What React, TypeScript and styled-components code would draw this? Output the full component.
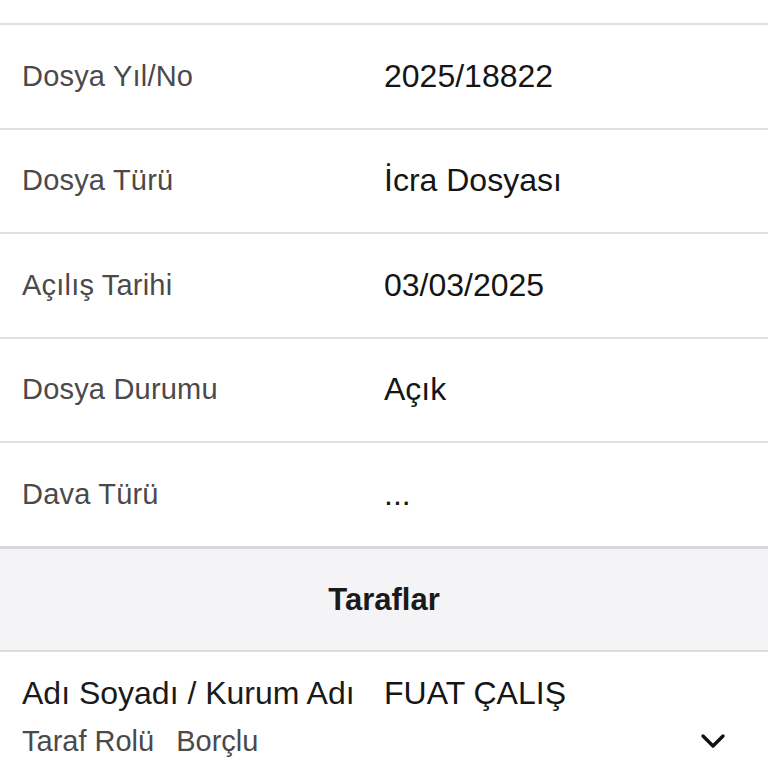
import React from 'react';
import styled, { createGlobalStyle } from 'styled-components';

const GlobalStyle = createGlobalStyle`
    * { box-sizing: border-box; }
    body {
        margin: 0;
        background: #ffffff;
        font-family: "Liberation Sans", Arial, sans-serif;
    }
`;

const details = [
    { label: 'Dosya Yıl/No', value: '2025/18822' },
    { label: 'Dosya Türü', value: 'İcra Dosyası' },
    { label: 'Açılış Tarihi', value: '03/03/2025' },
    { label: 'Dosya Durumu', value: 'Açık' },
    { label: 'Dava Türü', value: '...' },
];

const Chevron = () => (
    <svg width="26" height="16" viewBox="0 0 26 16" fill="none">
        <path d="M3 3l10 10 10-10" stroke="#111" strokeWidth="3.4" strokeLinecap="round" strokeLinejoin="round" />
    </svg>
);

const App = () => {
    return (
        <Page>
            <GlobalStyle />
            <CutRow />
            {details.map((d) => (
                <DetailRow key={d.label}>
                    <Label>{d.label}</Label>
                    <Value>{d.value}</Value>
                </DetailRow>
            ))}
            <SectionHeader>Taraflar</SectionHeader>
            <PartyRow>
                <PartyMain>
                    <PartyLabel>Adı Soyadı / Kurum Adı</PartyLabel>
                    <PartyName>FUAT ÇALIŞ</PartyName>
                </PartyMain>
                <PartySub>
                    <SubLabel>Taraf Rolü</SubLabel>
                    <SubValue>Borçlu</SubValue>
                    <Toggle><Chevron /></Toggle>
                </PartySub>
            </PartyRow>
        </Page>
    );
};

const Page = styled.main`
    width: 768px;
    height: 768px;
    overflow: hidden;
    background: #fff;
`;

const CutRow = styled.div`
    height: 25px;
    border-bottom: 2px solid #e1e1e1;
`;

const DetailRow = styled.div`
    height: 104.5px;
    display: grid;
    grid-template-columns: 384px 1fr;
    align-items: center;
    padding-left: 22px;
    border-bottom: 2px solid #e1e1e1;
`;

const Label = styled.span`
    font-size: 29px;
    color: #4a4a4a;
    letter-spacing: 0.2px;
`;

const Value = styled.span`
    font-size: 32px;
    color: #151515;
    margin-left: -22px;
`;

const SectionHeader = styled.div`
    height: 106px;
    margin-top: -2px;
    display: flex;
    align-items: center;
    justify-content: center;
    background: #f4f4f6;
    border-top: 3px solid #d8d8dc;
    border-bottom: 2px solid #dcdcdf;
    font-size: 31px;
    font-weight: 700;
    color: #1a1a1a;
    padding-top: 2px;
`;

const PartyRow = styled.div`
    padding: 23px 0 0 22px;
`;

const PartyMain = styled.div`
    display: flex;
    align-items: baseline;
`;

const PartyLabel = styled.span`
    width: 362px;
    font-size: 32px;
    color: #1a1a1a;
`;

const PartyName = styled.span`
    font-size: 32px;
    color: #151515;
`;

const PartySub = styled.div`
    display: flex;
    align-items: center;
    margin-top: 13px;
    padding-right: 42px;
`;

const SubLabel = styled.span`
    font-size: 29px;
    color: #4a4a4a;
`;

const SubValue = styled.span`
    font-size: 29px;
    color: #4a4a4a;
    margin-left: 22px;
`;

const Toggle = styled.span`
    margin-left: auto;
    display: flex;
    align-items: center;
`;

export default App;
